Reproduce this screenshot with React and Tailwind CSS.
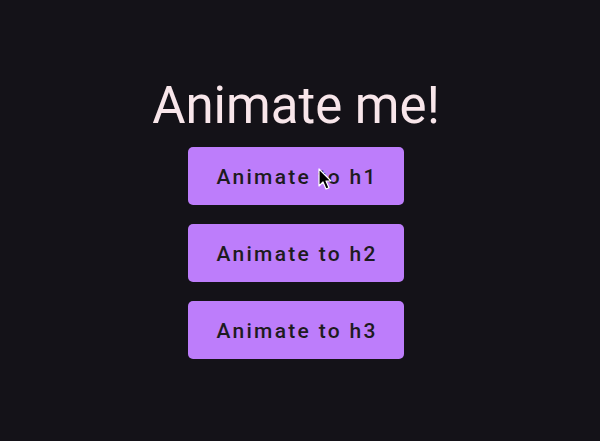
import React from "react";

const Cursor = () => (
  <svg
    className="absolute left-[318px] top-[168px]"
    width="16"
    height="24"
    viewBox="0 0 16 24"
  >
    <path
      d="M1 1 L1 18 L5 14 L8 21 L11 19.8 L8 13 L13 13 Z"
      fill="#000"
      stroke="#fff"
      strokeWidth="1.2"
      strokeLinejoin="round"
    />
  </svg>
);

const buttons = ["Animate to h1", "Animate to h2", "Animate to h3"];

export default function App() {
  return (
    <div
      className="relative w-[600px] h-[441px] bg-[#141218] flex flex-col items-center pt-[76px] pr-[8px]"
      style={{ fontFamily: "Roboto, sans-serif" }}
    >
      <h1 className="text-[51px] leading-[59px] text-[#f8e6ea] font-normal">Animate me!</h1>
      <div className="mt-[12px] flex flex-col gap-[19px]">
        {buttons.map((label) => (
          <button
            key={label}
            className="w-[216px] h-[58px] rounded-[5px] bg-[#bd7dfb] text-[#1d1b20] text-[21px] font-medium tracking-[2.3px] flex items-center justify-center pl-[2px] pt-[3px]"
          >
            {label}
          </button>
        ))}
      </div>
      <Cursor />
    </div>
  );
}
